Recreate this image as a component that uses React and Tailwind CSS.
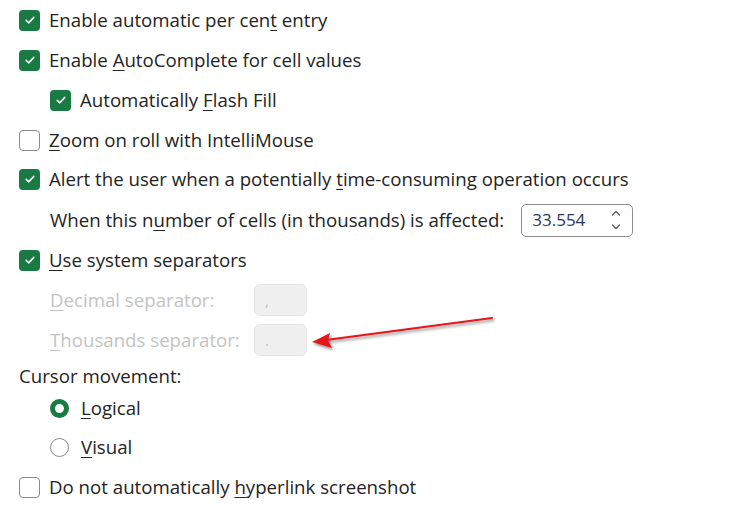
import React from "react";

const FONT = { fontFamily: '"Segoe UI", "Open Sans", "Liberation Sans", Arial, sans-serif' };

const Check = ({ checked }) =>
  checked ? (
    <span className="flex h-[21px] w-[21px] shrink-0 items-center justify-center rounded-[4px] bg-[#1a7a43]">
      <svg width="12" height="12" viewBox="0 0 12 12" fill="none">
        <path d="M2.2 6.3 L4.8 8.8 L9.8 3.4" stroke="white" strokeWidth="1.6" strokeLinecap="round" strokeLinejoin="round" />
      </svg>
    </span>
  ) : (
    <span className="h-[21px] w-[21px] shrink-0 rounded-[4px] border-[1.5px] border-[#8a8a8a] bg-white" />
  );

const Radio = ({ checked }) =>
  checked ? (
    <span className="h-[19px] w-[19px] shrink-0 rounded-full border-[5.5px] border-[#1a7a43] bg-white" />
  ) : (
    <span className="h-[19px] w-[19px] shrink-0 rounded-full border-[1.5px] border-[#8a8a8a] bg-white" />
  );

const U = ({ children }) => <span className="underline underline-offset-[3px] decoration-1">{children}</span>;

const Row = ({ h, indent, children }) => (
  <div className={`flex items-center ${h} ${indent ? "pl-[50px]" : "pl-[19px]"}`}>{children}</div>
);

export default function App() {
  return (
    <div className="relative h-[515px] w-[749px] overflow-hidden bg-white text-[18.67px] text-[#242424]" style={FONT}>
      <div className="flex flex-col">
        <Row h="h-[40px]">
          <Check checked />
          <span className="ml-[9px]">Enable automatic per cen<U>t</U> entry</span>
        </Row>
        <Row h="h-[40px]">
          <Check checked />
          <span className="ml-[9px]">Enable <U>A</U>utoComplete for cell values</span>
        </Row>
        <Row h="h-[40px]" indent>
          <Check checked />
          <span className="ml-[9px]">Automatically <U>F</U>lash Fill</span>
        </Row>
        <Row h="h-[40px]">
          <Check />
          <span className="ml-[9px]"><U>Z</U>oom on roll with IntelliMouse</span>
        </Row>
        <Row h="h-[38px]">
          <Check checked />
          <span className="ml-[9px]">Alert the user when a potentially <U>t</U>ime-consuming operation occurs</span>
        </Row>
        <Row h="h-[44px]" indent>
          <span>When this n<U>u</U>mber of cells (in thousands) is affected:</span>
          <div className="ml-[17px] flex h-[33px] w-[112px] items-center justify-between rounded-[5px] border border-[#8d8d8d] pl-[10px] pr-[11px]">
            <span className="text-[17px] text-[#2a3a58]">33.554</span>
            <svg width="10" height="24" viewBox="0 0 10 24" fill="none">
              <path d="M1.5 7 L5 3.5 L8.5 7" stroke="#555" strokeWidth="1.2" strokeLinecap="round" strokeLinejoin="round" />
              <path d="M1.5 17 L5 20.5 L8.5 17" stroke="#555" strokeWidth="1.2" strokeLinecap="round" strokeLinejoin="round" />
            </svg>
          </div>
        </Row>
        <Row h="h-[36px]">
          <Check checked />
          <span className="ml-[9px]"><U>U</U>se system separators</span>
        </Row>
        <Row h="h-[44px]" indent>
          <span className="w-[204px] text-[#c3c3c3]"><U>D</U>ecimal separator:</span>
          <div className="flex h-[32px] w-[53px] items-center rounded-[6px] border border-[#e4e4e4] bg-[#f0f0f0] pl-[10px] text-[15px] text-[#bcbcbc]">,</div>
        </Row>
        <Row h="h-[36px]" indent>
          <span className="w-[204px] text-[#c3c3c3]"><U>T</U>housands separator:</span>
          <div className="flex h-[32px] w-[53px] items-center rounded-[6px] border border-[#e4e4e4] bg-[#f0f0f0] pl-[10px] text-[15px] text-[#bcbcbc]">.</div>
        </Row>
        <Row h="h-[35px]">
          <span>Cursor movement:</span>
        </Row>
        <Row h="h-[30px]" indent>
          <Radio checked />
          <span className="ml-[12px]"><U>L</U>ogical</span>
        </Row>
        <Row h="h-[48px]" indent>
          <Radio />
          <span className="ml-[12px]"><U>V</U>isual</span>
        </Row>
        <Row h="h-[32px]">
          <Check />
          <span className="ml-[9px]">Do not automatically <U>h</U>yperlink screenshot</span>
        </Row>
      </div>

      <svg className="pointer-events-none absolute left-0 top-0" width="749" height="515" viewBox="0 0 749 515">
        <defs>
          <filter id="sh" x="-20%" y="-50%" width="140%" height="200%">
            <feDropShadow dx="1.5" dy="2" stdDeviation="1.5" floodColor="#000" floodOpacity="0.45" />
          </filter>
        </defs>
        <g filter="url(#sh)">
          <line x1="492" y1="318" x2="326" y2="340" stroke="#e8141a" strokeWidth="2.2" strokeLinecap="round" />
          <path d="M312 342 L330 333 L328 340.5 L332 348 Z" fill="#e8141a" />
        </g>
      </svg>
    </div>
  );
}
